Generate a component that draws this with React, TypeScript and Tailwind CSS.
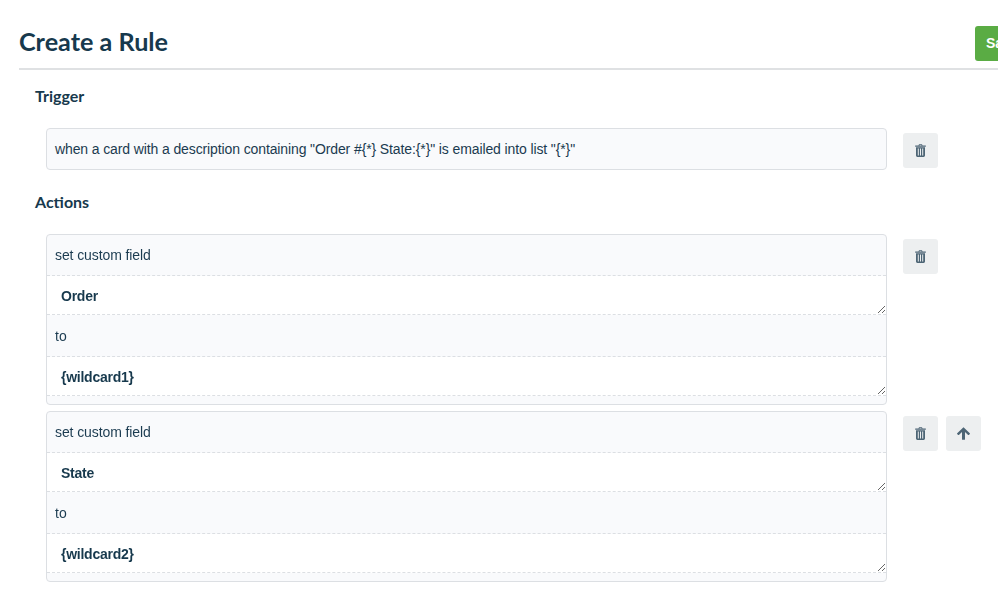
const sans = "font-['Liberation_Sans',Arial,sans-serif]"
const lato = "font-['Lato',sans-serif]"

function TrashIcon() {
  return (
    <svg width="11" height="13" viewBox="0 0 11 13" fill="#4d6575">
      <path d="M3.5 1.5 L4 .2 H7 L7.5 1.5 H10.8 V2.7 H.2 V1.5 Z M4.6 .9 L4.35 1.5 H6.65 L6.4 .9 Z" fillRule="evenodd" />
      <path
        d="M1 3.2 H10 V11.6 Q10 13 8.6 13 H2.4 Q1 13 1 11.6 Z M2.8 4.5 V11.6 H3.8 V4.5 Z M5 4.5 V11.6 H6 V4.5 Z M7.2 4.5 V11.6 H8.2 V4.5 Z"
        fillRule="evenodd"
      />
    </svg>
  )
}

function ArrowIcon() {
  return (
    <svg width="13" height="13" viewBox="0 0 13 13" fill="#4d6575">
      <path d="M6.5 .2 L12.8 6.3 Q13.1 6.7 12.8 7 L11.9 7.9 Q11.5 8.2 11.1 7.9 L8 4.9 V12.2 Q8 12.8 7.4 12.8 H5.6 Q5 12.8 5 12.2 V4.9 L1.9 7.9 Q1.5 8.2 1.1 7.9 L.2 7 Q-.1 6.7 .2 6.3 Z" />
    </svg>
  )
}

function IconButton({ children }: { children: React.ReactNode }) {
  return (
    <button className="flex h-[35px] w-[35px] items-center justify-center rounded-[3px] bg-[#edeff0]">
      {children}
    </button>
  )
}

function FieldRow({ value }: { value: string }) {
  return (
    <textarea
      readOnly
      value={value}
      className={`${sans} block h-[39px] w-full resize-y border-b border-dashed border-[#dcdfe3] bg-white px-[14px] pt-[12px] pb-[10px] text-[14px] leading-[17px] font-bold tracking-[-0.25px] text-[#17394d] outline-none`}
    />
  )
}

function ActionCard({ field, wildcard }: { field: string; wildcard: string }) {
  return (
    <div className="w-[841px] overflow-hidden rounded-[4px] border border-[#dcdfe3] bg-[#f9fafc]">
      <div className="flex h-[41px] items-center border-b border-dashed border-[#dcdfe3] px-2 text-[14px] tracking-[-0.1px] text-[#1b3b50]">
        set custom field
      </div>
      <FieldRow value={field} />
      <div className="flex h-[42px] items-center border-b border-dashed border-[#dcdfe3] px-2 pt-[2px] text-[14px] text-[#1b3b50]">
        to
      </div>
      <FieldRow value={wildcard} />
      <div className="h-[8px]" />
    </div>
  )
}

export default function App() {
  return (
    <div className={`${sans} h-[607px] w-[998px] overflow-hidden bg-white text-[#17394d]`}>
      <div className="ml-[19px] flex h-[70px] w-[1060px] items-start justify-between border-b-2 border-[#dfe1e3]">
        <h1 className={`${lato} mt-[22px] text-[25.2px] leading-[38px] font-bold text-[#17394d]`}>Create a Rule</h1>
        <button className="mt-[26px] h-[35px] w-[104px] rounded-[3px] bg-[#5aac44] pl-[11px] text-left text-[14px] font-bold text-white">
          Save
        </button>
      </div>

      <div className="pl-[35px]">
        <h2 className={`${lato} mt-[16px] text-[16px] leading-[20px] font-bold`}>Trigger</h2>
        <div className="mt-[22px] ml-[11px] flex items-start">
          <div className="flex h-[42px] w-[841px] items-center rounded-[4px] border border-[#dcdfe3] bg-[#f9fafc] px-2 text-[14px] tracking-[-0.115px] text-[#1b3b50]">
            when a card with a description containing "Order #{"{*}"} State:{"{*}"}" is emailed into list "{"{*}"}"
          </div>
          <div className="mt-[5px] ml-[16px]">
            <IconButton>
              <TrashIcon />
            </IconButton>
          </div>
        </div>

        <h2 className={`${lato} mt-[22px] text-[16px] leading-[20px] font-bold`}>Actions</h2>
        <div className="mt-[22px] ml-[11px] flex items-start">
          <ActionCard field="Order" wildcard="{wildcard1}" />
          <div className="mt-[5px] ml-[16px]">
            <IconButton>
              <TrashIcon />
            </IconButton>
          </div>
        </div>
        <div className="mt-[6px] ml-[11px] flex items-start">
          <ActionCard field="State" wildcard="{wildcard2}" />
          <div className="mt-[5px] ml-[16px] flex gap-2">
            <IconButton>
              <TrashIcon />
            </IconButton>
            <IconButton>
              <ArrowIcon />
            </IconButton>
          </div>
        </div>
      </div>
    </div>
  )
}
